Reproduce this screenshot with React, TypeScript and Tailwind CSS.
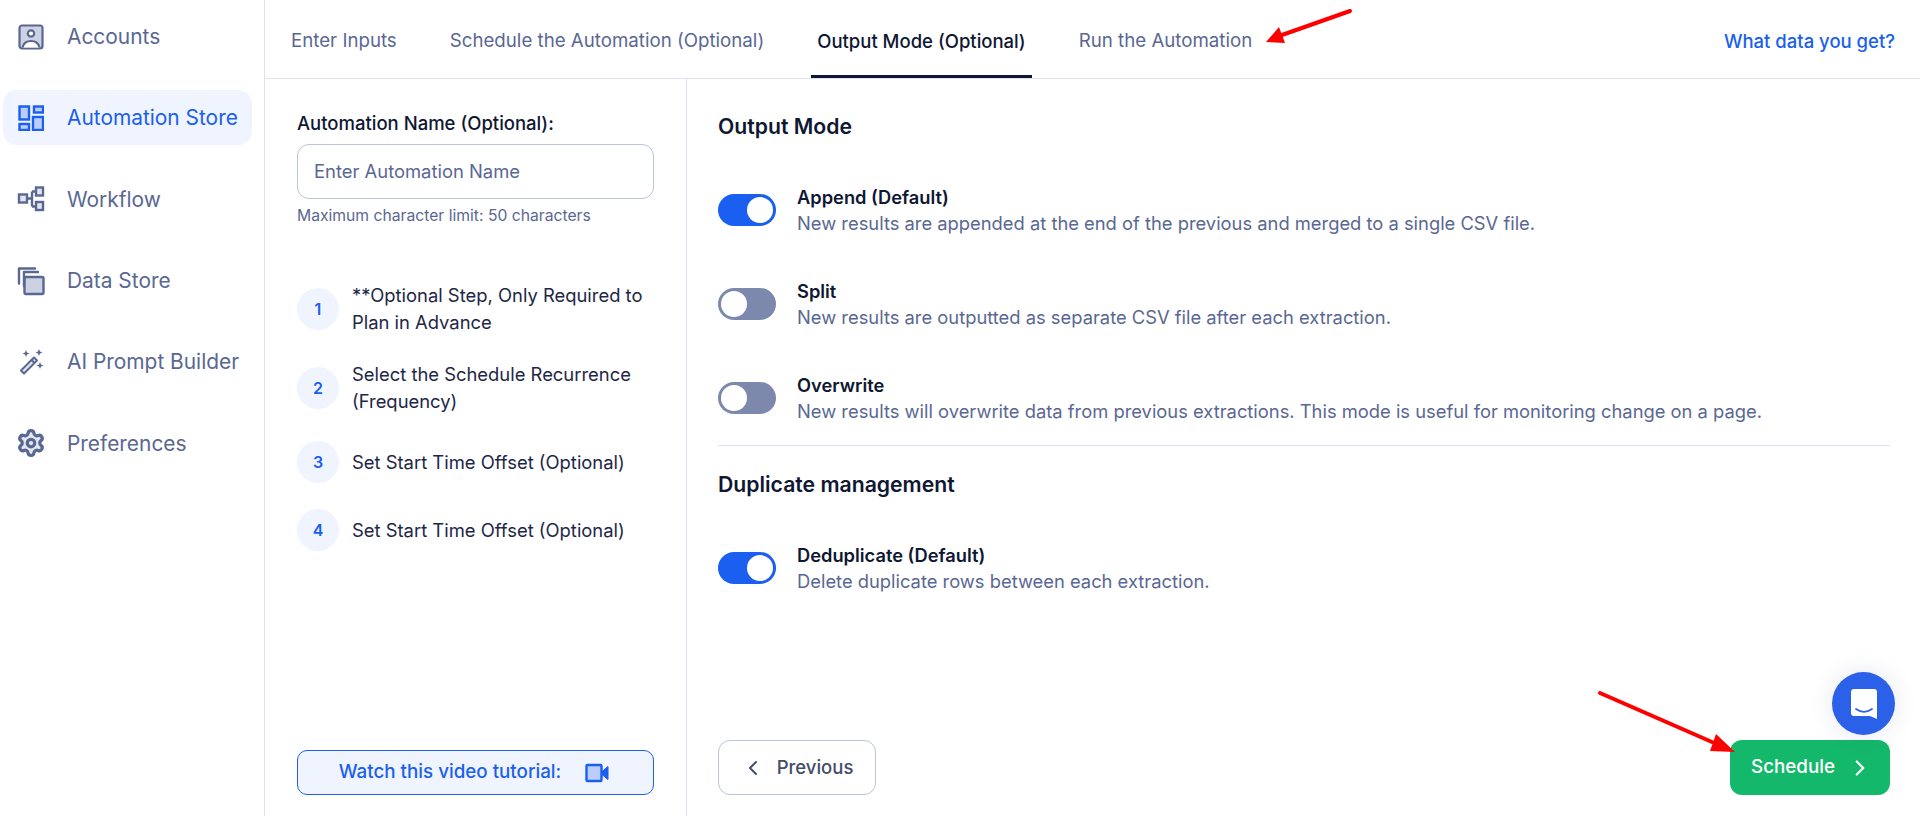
import { ChevronLeft, ChevronRight, Settings } from "lucide-react";

const tabs = ["Enter Inputs", "Schedule the Automation (Optional)", "Output Mode (Optional)", "Run the Automation"];

const steps = [
  { text: "**Optional Step, Only Required to Plan in Advance", cls: "mb-[25px]" },
  { text: "Select the Schedule Recurrence (Frequency)", cls: "mb-[26px]" },
  { text: "Set Start Time Offset (Optional)", cls: "mb-[26px]" },
  { text: "Set Start Time Offset (Optional)", cls: "" },
];

function AccountsIcon() {
  return (
    <svg width="26" height="26" viewBox="0 0 26 26" fill="none" stroke="#5a6793" strokeWidth="2.2">
      <rect x="1.5" y="1.5" width="23" height="23" rx="2.5" fill="#cdd2e2" />
      <circle cx="13" cy="9.5" r="3.2" fill="#fff" />
      <path d="M4.5 23.5c1-4.5 4.5-6.5 8.500-6.500s7.500 2 8.500 6.500" fill="#fff" />
    </svg>
  );
}

function StoreIcon() {
  return (
    <svg width="26" height="26" viewBox="0 0 26 26" fill="#bccdfb" stroke="#1a5ff0" strokeWidth="2.4">
      <rect x="1.500" y="1.500" width="9.500" height="13" />
      <rect x="16" y="1.500" width="9" height="6" />
      <rect x="1.500" y="19" width="9.500" height="6" />
      <rect x="15" y="12" width="10" height="13" />
    </svg>
  );
}

function WorkflowIcon() {
  return (
    <svg width="28" height="26" viewBox="0 0 28 26" fill="none" stroke="#5a6793" strokeWidth="2.400">
      <rect x="2" y="8.500" width="8" height="8" fill="#e3e6ef" />
      <rect x="19" y="1.500" width="7" height="8" fill="#e3e6ef" />
      <rect x="19" y="16" width="7" height="8" fill="#e3e6ef" />
      <path d="M10 12.500h5M15 5.500v15M15 5.500h4M15 20.500h4" />
    </svg>
  );
}

function DataIcon() {
  return (
    <svg width="30" height="30" viewBox="0 0 30 30" fill="none" stroke="#5a6793" strokeWidth="2.400" strokeLinecap="round">
      <rect x="8.500" y="11" width="19" height="17" rx="1.500" fill="#cdd2e2" />
      <path d="M8 6h14M3 2.500h14c2 0 2 0 2 0M3 2.500v15M8 6v14" />
    </svg>
  );
}

function WandIcon() {
  return (
    <svg width="26" height="26" viewBox="0 0 26 26" fill="#5a6793">
      <path d="M16 8.500l3 3L6 24.500l-3-3z" fill="#e3e6ef" stroke="#5a6793" strokeWidth="2" strokeLinejoin="round" />
      <path d="M13 10.500l3 3" stroke="#5a6793" strokeWidth="2" />
      <path d="M8 1l1 2.500L11.500 4.500 9 5.500 8 8 7 5.500 4.500 4.500 7 3.500zM21 0l1 2.500 2.500 1-2.500 1-1 2.500-1-2.500-2.500-1 2.500-1zM22 13l1 2.500 2.500 1-2.500 1-1 2.500-1-2.500-2.500-1 2.500-1z" />
    </svg>
  );
}

const nav = [
  { label: "Accounts", icon: <AccountsIcon /> },
  { label: "Automation Store", icon: <StoreIcon />, active: true },
  { label: "Workflow", icon: <WorkflowIcon /> },
  { label: "Data Store", icon: <DataIcon /> },
  { label: "AI Prompt Builder", icon: <WandIcon /> },
  { label: "Preferences", icon: <Settings size={30} color="#5a6793" strokeWidth={2.6} fill="#e3e6ef" /> },
];

function Toggle({ on }: { on?: boolean }) {
  return (
    <div
      className={`flex h-8 w-[58px] shrink-0 items-center rounded-full p-[3px] ${
        on ? "justify-end bg-[#1a5ff0]" : "justify-start bg-[#7d88ad]"
      }`}
    >
      <div className="h-[26px] w-[26px] rounded-full bg-white" />
    </div>
  );
}

function OptionRow({ title, desc, on, cls }: { title: string; desc: string; on?: boolean; cls: string }) {
  return (
    <div className={`flex items-center gap-[21px] ${cls}`}>
      <Toggle on={on} />
      <div>
        <div className="text-[18.3px] leading-[26px] font-semibold text-[#0f1733]">{title}</div>
        <div className="text-[18.35px] leading-[26px] text-[#5a6793]">{desc}</div>
      </div>
    </div>
  );
}

export default function App() {
  return (
    <div className="relative flex h-[816px] w-[1920px] overflow-hidden bg-white font-['Inter',sans-serif]">
      {/* Sidebar */}
      <aside className="flex w-[265px] shrink-0 flex-col gap-[26.4px] border-r border-[#dfe2ec] pt-[9px] pl-[3px]">
        {nav.map((item) => (
          <div
            key={item.label}
            className={`flex h-[55px] w-[249px] items-center rounded-[14px] ${
              item.active ? "bg-[#f0f4fe] text-[#1a5ff0]" : "text-[#5a6793]"
            }`}
          >
            <div className="flex w-[64px] justify-center pr-[8px]">{item.icon}</div>
            <span className="text-[20.9px]">{item.label}</span>
          </div>
        ))}
      </aside>

      <div className="flex min-w-0 flex-1 flex-col">
        {/* Tabs */}
        <div className="flex h-[79px] shrink-0 items-stretch border-b border-[#dfe2ec] pr-[25px] pl-[20px]">
          <div className="flex gap-[41px]">
            {tabs.map((tab) => (
              <div
                key={tab}
                className={`flex items-center px-[6px] pt-[8px] ${
                  tab.startsWith("Output")
                    ? "border-b-[3px] border-[#0f1733] text-[18.5px] font-medium text-[#0f1733]"
                    : "border-b-[3px] border-transparent text-[18.7px] text-[#5a6793]"
                }`}
              >
                {tab}
              </div>
            ))}
          </div>
          <div className="ml-auto flex items-center pt-[6px] text-[18.5px] font-medium text-[#1a5ff0]">What data you get?</div>
        </div>

        <div className="flex min-h-0 flex-1">
          {/* Left panel */}
          <div className="flex w-[422px] shrink-0 flex-col border-r border-[#dfe2ec] pt-[31px] pr-[32px] pb-[21px] pl-[32px]">
            <div className="text-[18.5px] leading-[26px] font-medium text-[#0f1733]">Automation Name (Optional):</div>
            <div className="mt-[8px] flex h-[55px] items-center rounded-[12px] border border-[#bcc3da] px-4 text-[18.4px] text-[#5a6793]">
              Enter Automation Name
            </div>
            <div className="mt-[6px] text-[15.7px] leading-[22px] text-[#5a6793]">Maximum character limit: 50 characters</div>

            <div className="mt-[55px]">
              {steps.map((step, i) => (
                <div key={i} className={`flex items-center gap-[13px] ${step.cls}`}>
                  <div className="flex h-[42px] w-[42px] shrink-0 items-center justify-center rounded-full bg-[#f0f4fe] text-[16px] font-semibold text-[#1a5ff0]">
                    {i + 1}
                  </div>
                  <div className="text-[18.4px] leading-[27px] text-[#1e2746]">{step.text}</div>
                </div>
              ))}
            </div>

            <div className="mt-auto flex h-[45px] items-center justify-center gap-[24px] rounded-[10px] border border-[#1a5ff0] bg-[#f0f4fe] pr-[3px] text-[18.8px] font-medium text-[#1a5ff0]">
              <span>Watch this video tutorial:</span>
              <svg width="24" height="20" viewBox="0 0 24 20" fill="#bccdfb" stroke="#1a5ff0" strokeWidth="2.400">
                <rect x="1.500" y="2" width="15" height="16" rx="1" />
                <path d="M17 8.500l6-5v13l-6-5z" fill="#1a5ff0" strokeWidth="1" />
              </svg>
            </div>
          </div>

          {/* Right panel */}
          <div className="flex min-w-0 flex-1 flex-col pt-[33px] pr-[30px] pb-[21px] pl-[31px]">
            <h2 className="text-[21.2px] leading-[28px] font-semibold text-[#0f1733]">Output Mode</h2>
            <div className="mt-[44px]">
              <OptionRow
                on
                cls="mb-[42px]"
                title="Append (Default)"
                desc="New results are appended at the end of the previous and merged to a single CSV file."
              />
              <OptionRow
                cls="mb-[42px]"
                title="Split"
                desc="New results are outputted as separate CSV file after each extraction."
              />
              <OptionRow
                cls=""
                title="Overwrite"
                desc="New results will overwrite data from previous extractions. This mode is useful for monitoring change on a page."
              />
            </div>
            <div className="mt-[21px] border-t border-[#dfe2ec]" />
            <h2 className="mt-[24px] text-[21.2px] leading-[28px] font-semibold text-[#0f1733]">Duplicate management</h2>
            <div className="mt-[44px]">
              <OptionRow on cls="" title="Deduplicate (Default)" desc="Delete duplicate rows between each extraction." />
            </div>

            <div className="mt-auto flex items-center justify-between">
              <div className="flex h-[55px] w-[158px] items-center justify-center gap-[12px] rounded-[12px] border border-[#bcc3da] text-[18.5px] font-medium text-[#434c6b]">
                <ChevronLeft size={24} strokeWidth={2} />
                Previous
              </div>
              <div className="flex h-[55px] w-[160px] items-center justify-center gap-[12px] rounded-[12px] bg-[#14b86a] pl-[4px] text-[18.8px] font-medium text-white">
                Schedule
                <ChevronRight size={26} strokeWidth={2} />
              </div>
            </div>
          </div>
        </div>
      </div>

      {/* Chat bubble */}
      <div className="absolute top-[672px] left-[1832px] flex h-[63px] w-[63px] items-center justify-center rounded-full bg-[#2b60e8] shadow-[0_0_24px_rgba(40,60,120,0.12)]">
        <svg width="28" height="32" viewBox="0 0 28 32" fill="none">
          <path d="M4 1h20a3 3 0 0 1 3 3v27l-7-3H4a3 3 0 0 1-3-3V4a3 3 0 0 1 3-3z" fill="#fff" />
          <path d="M6 21c5 3.500 11 3.500 16 0" stroke="#2b60e8" strokeWidth="1.800" strokeLinecap="round" />
        </svg>
      </div>

      {/* Red annotation arrows */}
      <svg className="pointer-events-none absolute inset-0" width="1920" height="816" viewBox="0 0 1920 816" fill="#ff0000" stroke="none">
        <path d="M1350 11L1282 35" stroke="#ff0000" strokeWidth="4" strokeLinecap="round" />
        <path d="M1266 42L1279 27L1285 43z" />
        <path d="M1600 693L1712 742" stroke="#ff0000" strokeWidth="4" strokeLinecap="round" />
        <path d="M1735 752L1710 751L1716 734z" />
      </svg>
    </div>
  );
}
